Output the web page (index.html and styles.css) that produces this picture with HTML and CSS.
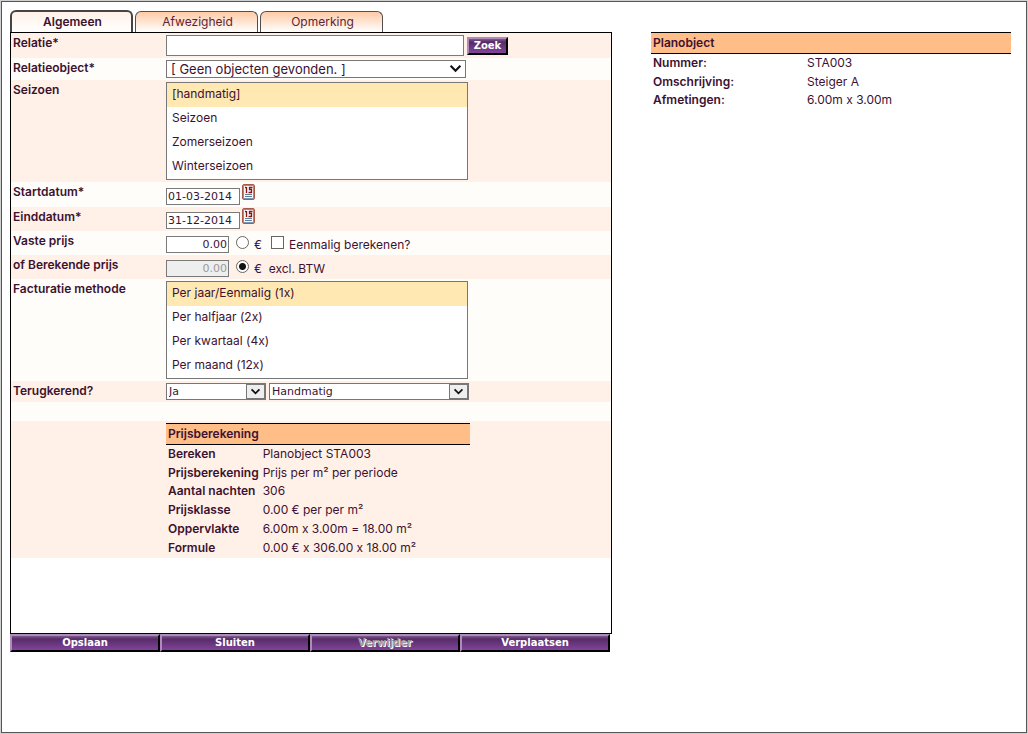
FILE: index.html
```html
<!DOCTYPE html>
<html lang="nl">
<head>
<meta charset="utf-8">
<title>Planobject reservering</title>
<link rel="stylesheet" href="styles.css">
</head>
<body>
<svg class="defs" aria-hidden="true">
  <symbol id="calendar" viewBox="0 0 13 16">
    <rect x="0.5" y="0.5" width="12" height="15" rx="1.5" fill="#fff" stroke="#a85a48"/>
    <rect x="1.5" y="1.5" width="10" height="13" fill="#f4f8fc" stroke="#7c95b5"/>
    <path d="M3 3.500h1M4.500 3v6M10.500 3.500H7.500V5.500H9.500V8.500H6.500" fill="none" stroke="#8c1212" stroke-width="1.300"/>
    <path d="M3 10.500h7M3 12.500h7" stroke="#62809c"/>
  </symbol>
  <symbol id="chevron" viewBox="0 0 12 8">
    <path d="M1.500 1.500L6 6l4.500-4.500" fill="none" stroke="#111" stroke-width="2"/>
  </symbol>
</svg>
<main class="frame">
  <div class="columns">
    <form class="editor">
      <nav class="tabs">
        <button type="button" class="tab tab-active">Algemeen</button>
        <button type="button" class="tab">Afwezigheid</button>
        <button type="button" class="tab">Opmerking</button>
      </nav>
      <div class="panel">
        <div class="row row-search">
          <label for="relatie">Relatie*</label>
          <div class="field"><input id="relatie" class="box search" type="text"><button type="button" class="btn zoek">Zoek</button></div>
        </div>
        <div class="row row-object">
          <label for="object">Relatieobject*</label>
          <div class="field">
            <span class="drop drop-plain"><select id="object"><option>[ Geen objecten gevonden. ]</option></select><svg class="arrow"><use href="#chevron"/></svg></span>
          </div>
        </div>
        <div class="row row-list">
          <label for="seizoen">Seizoen</label>
          <div class="field">
            <select id="seizoen" class="list" size="4"><option selected>[handmatig]</option><option>Seizoen</option><option>Zomerseizoen</option><option>Winterseizoen</option></select>
          </div>
        </div>
        <div class="row row-date">
          <label for="start">Startdatum*</label>
          <div class="field"><input id="start" class="box date" type="text" value="01-03-2014"><button type="button" class="cal" aria-label="Kies startdatum"><svg><use href="#calendar"/></svg></button></div>
        </div>
        <div class="row row-line">
          <label for="eind">Einddatum*</label>
          <div class="field"><input id="eind" class="box date" type="text" value="31-12-2014"><button type="button" class="cal" aria-label="Kies einddatum"><svg><use href="#calendar"/></svg></button></div>
        </div>
        <div class="row row-line">
          <label for="vast">Vaste prijs</label>
          <div class="field price"><input id="vast" class="box amount" type="text" value="0.00"><input id="r1" class="radio" type="radio" name="prijs"><label for="r1">€</label><input id="eenmalig" class="check" type="checkbox"><label for="eenmalig">Eenmalig berekenen?</label></div>
        </div>
        <div class="row row-line">
          <label for="berekend">of Berekende prijs</label>
          <div class="field price"><input id="berekend" class="box amount" type="text" value="0.00" disabled><input id="r2" class="radio" type="radio" name="prijs" checked><label for="r2">€&nbsp; excl. BTW</label></div>
        </div>
        <div class="row row-list">
          <label for="methode">Facturatie methode</label>
          <div class="field">
            <select id="methode" class="list" size="4"><option selected>Per jaar/Eenmalig (1x)</option><option>Per halfjaar (2x)</option><option>Per kwartaal (4x)</option><option>Per maand (12x)</option></select>
          </div>
        </div>
        <div class="row row-repeat">
          <label for="terug">Terugkerend?</label>
          <div class="field">
            <span class="drop drop-short"><select id="terug"><option>Ja</option></select><svg class="arrow"><use href="#chevron"/></svg></span>
            <span class="drop drop-long"><select aria-label="Verlenging"><option>Handmatig</option></select><svg class="arrow"><use href="#chevron"/></svg></span>
          </div>
        </div>
        <div class="row row-blank"></div>
        <div class="row row-calc">
          <table class="info calc">
            <thead><tr><th colspan="2">Prijsberekening</th></tr></thead>
            <tbody>
              <tr><th>Bereken</th><td>Planobject STA003</td></tr>
              <tr><th>Prijsberekening</th><td>Prijs per m² per periode</td></tr>
              <tr><th>Aantal nachten</th><td>306</td></tr>
              <tr><th>Prijsklasse</th><td>0.00 € per per m²</td></tr>
              <tr><th>Oppervlakte</th><td>6.00m x 3.00m = 18.00 m²</td></tr>
              <tr><th>Formule</th><td>0.00 € x 306.00 x 18.00 m²</td></tr>
            </tbody>
          </table>
        </div>
      </div>
      <div class="actions">
        <button type="button" class="btn">Opslaan</button>
        <button type="button" class="btn">Sluiten</button>
        <button type="button" class="btn" disabled>Verwijder</button>
        <button type="button" class="btn">Verplaatsen</button>
      </div>
    </form>
    <aside>
      <table class="info object">
        <thead><tr><th colspan="2">Planobject</th></tr></thead>
        <tbody>
          <tr><th>Nummer:</th><td>STA003</td></tr>
          <tr><th>Omschrijving:</th><td>Steiger A</td></tr>
          <tr><th>Afmetingen:</th><td>6.00m x 3.00m</td></tr>
        </tbody>
      </table>
    </aside>
  </div>
</main>
</body>
</html>
```
FILE: styles.css
```css
* { box-sizing: border-box; }
body {
  margin: 0;
  padding: 1px;
  background: #d0d0d0;
  color: #3c1230;
  font: 12px/18px "Century Gothic", Inter, sans-serif;
  font-feature-settings: "calt" 0;
}
.defs { display: none; }
input, select, button { margin: 0; font: inherit; color: inherit; border-radius: 0; }
.frame {
  min-height: calc(100vh - 2px);
  padding: 8px 15px 8px 8px;
  border: 1px solid #555;
  background: #fff;
}
.columns { display: grid; grid-template-columns: minmax(0, 602fr) minmax(0, 360fr); gap: 39px; }
aside { padding-top: 22px; }

.tabs { display: flex; align-items: flex-end; gap: 2px; height: 22px; }
.tab {
  width: 123px;
  height: 21px;
  padding: 0 0 0 2px;
  border: 1px solid #505050;
  border-bottom: 0;
  border-radius: 6px 6px 0 0;
  background: linear-gradient(#ffcba6, #fff);
  color: #5c2436;
}
.tab-active {
  height: 22px;
  border-width: 2px 2px 0;
  border-color: #444;
  background: linear-gradient(#fff1e8, #fff);
  color: #3c1230;
  font-weight: 600;
}

.panel { min-height: 602px; border: 1px solid #000; }
.row { display: grid; grid-template-columns: 153px minmax(0, 1fr); padding: 0 2px; background: #fffdfa; }
.row:nth-child(odd) { background: #fff1e8; }
.row > label { padding-top: 1px; font-weight: 600; }
.field { display: flex; align-items: flex-start; }
.row-search { min-height: 25px; }
.row-search .field { padding-top: 2px; gap: 3px; }
.row-object { min-height: 22px; }
.row-object .field { padding-top: 2px; }
.row-list { min-height: 102px; }
.row-list .field { padding-top: 2px; }
.row-date { min-height: 25px; }
.row-date .field { padding-top: 1px; }
.row-line { min-height: 24px; }
.row-repeat { min-height: 21px; }
.row-repeat .field { padding-top: 2px; gap: 3px; }
.row-blank { min-height: 19px; }
.row-calc { min-height: 137px; padding-top: 2px; }

.box {
  height: 17px;
  margin-top: 5px;
  padding: 0 1px;
  border: 1px solid #7a7a7a;
  background: #fff;
  font: 11px/15px Verdana, "DejaVu Sans", sans-serif;
}
.search { width: 298px; height: 21px; margin-top: 0; }
.date { width: 74px; }
.amount { width: 63px; text-align: right; }
.amount:disabled { background: #eee; color: #9a9a9a; }
.cal { width: 13px; height: 16px; margin: 1px 0 0 2px; padding: 0; border: 0; background: none; }
.cal svg { display: block; width: 13px; height: 16px; }
.price label { padding-top: 5px; font-size: 12px; }
.radio, .check {
  appearance: none;
  width: 13px;
  height: 13px;
  margin: 5px 5px 0 7px;
  border: 1px solid #666;
  background: #fff;
}
.radio { border-radius: 50%; }
.radio:checked { background: radial-gradient(circle, #111 3px, #fff 4px); }
.check { margin-left: 9px; }

.drop { position: relative; display: block; }
.drop select {
  display: block;
  appearance: none;
  width: 100%;
  height: 17px;
  padding: 0 20px 0 2px;
  border: 1px solid #777;
  background: #fff;
  font: 11px/15px Tahoma, "DejaVu Sans", sans-serif;
}
.drop .arrow {
  position: absolute;
  top: 1px;
  right: 1px;
  width: 19px;
  height: 15px;
  padding: 3px;
  border: 1px solid #777;
  background: #eee;
  pointer-events: none;
}
.drop-short { width: 100px; }
.drop-long { width: 200px; }
.drop-plain { width: 300px; }
.drop-plain select { height: 18px; padding-left: 4px; font: 13px/16px "Century Gothic", Inter, sans-serif; }
.drop-plain .arrow { border: 0; background: none; }

.list {
  width: 302px;
  height: 98px;
  padding: 0;
  border: 1px solid #777;
  background: #fff;
  overflow: hidden;
  outline: 0;
}
.list option { min-height: 24px; padding: 3px 5px; line-height: 18px; color: #3c1230; }
.list option:checked { background: #ffe8b2 linear-gradient(#ffe8b2, #ffe8b2); color: #3c1230; }

.btn {
  height: 18px;
  padding: 0;
  border: 2px solid;
  border-color: #ae8bbb #000 #000 #ae8bbb;
  background: linear-gradient(#7d5a8c, #572b68 3px, #80449a);
  color: #fff;
  font: 700 10px/14px Verdana, "DejaVu Sans", sans-serif;
}
.btn:disabled { color: #9d9d9d; text-shadow: 1px 1px 0 #fff; }
.zoek { width: 41px; margin-top: 2px; }
.actions { display: grid; grid-template-columns: repeat(4, 1fr); padding-right: 2px; }

.info { border-collapse: collapse; width: 100%; }
.info th { text-align: left; padding: 0 2px; height: 19px; font-weight: 600; white-space: nowrap; }
.info td { padding: 0 2px; height: 19px; }
.info tbody tr:nth-child(2) > * { height: 18px; }
.info thead th { height: 21px; border: solid #000; border-width: 1px 0; background: #ffbd88; }
.calc { grid-column: 2; width: 304px; }
.calc tbody th { width: 94px; }
.object tbody th { width: 154px; }
```
